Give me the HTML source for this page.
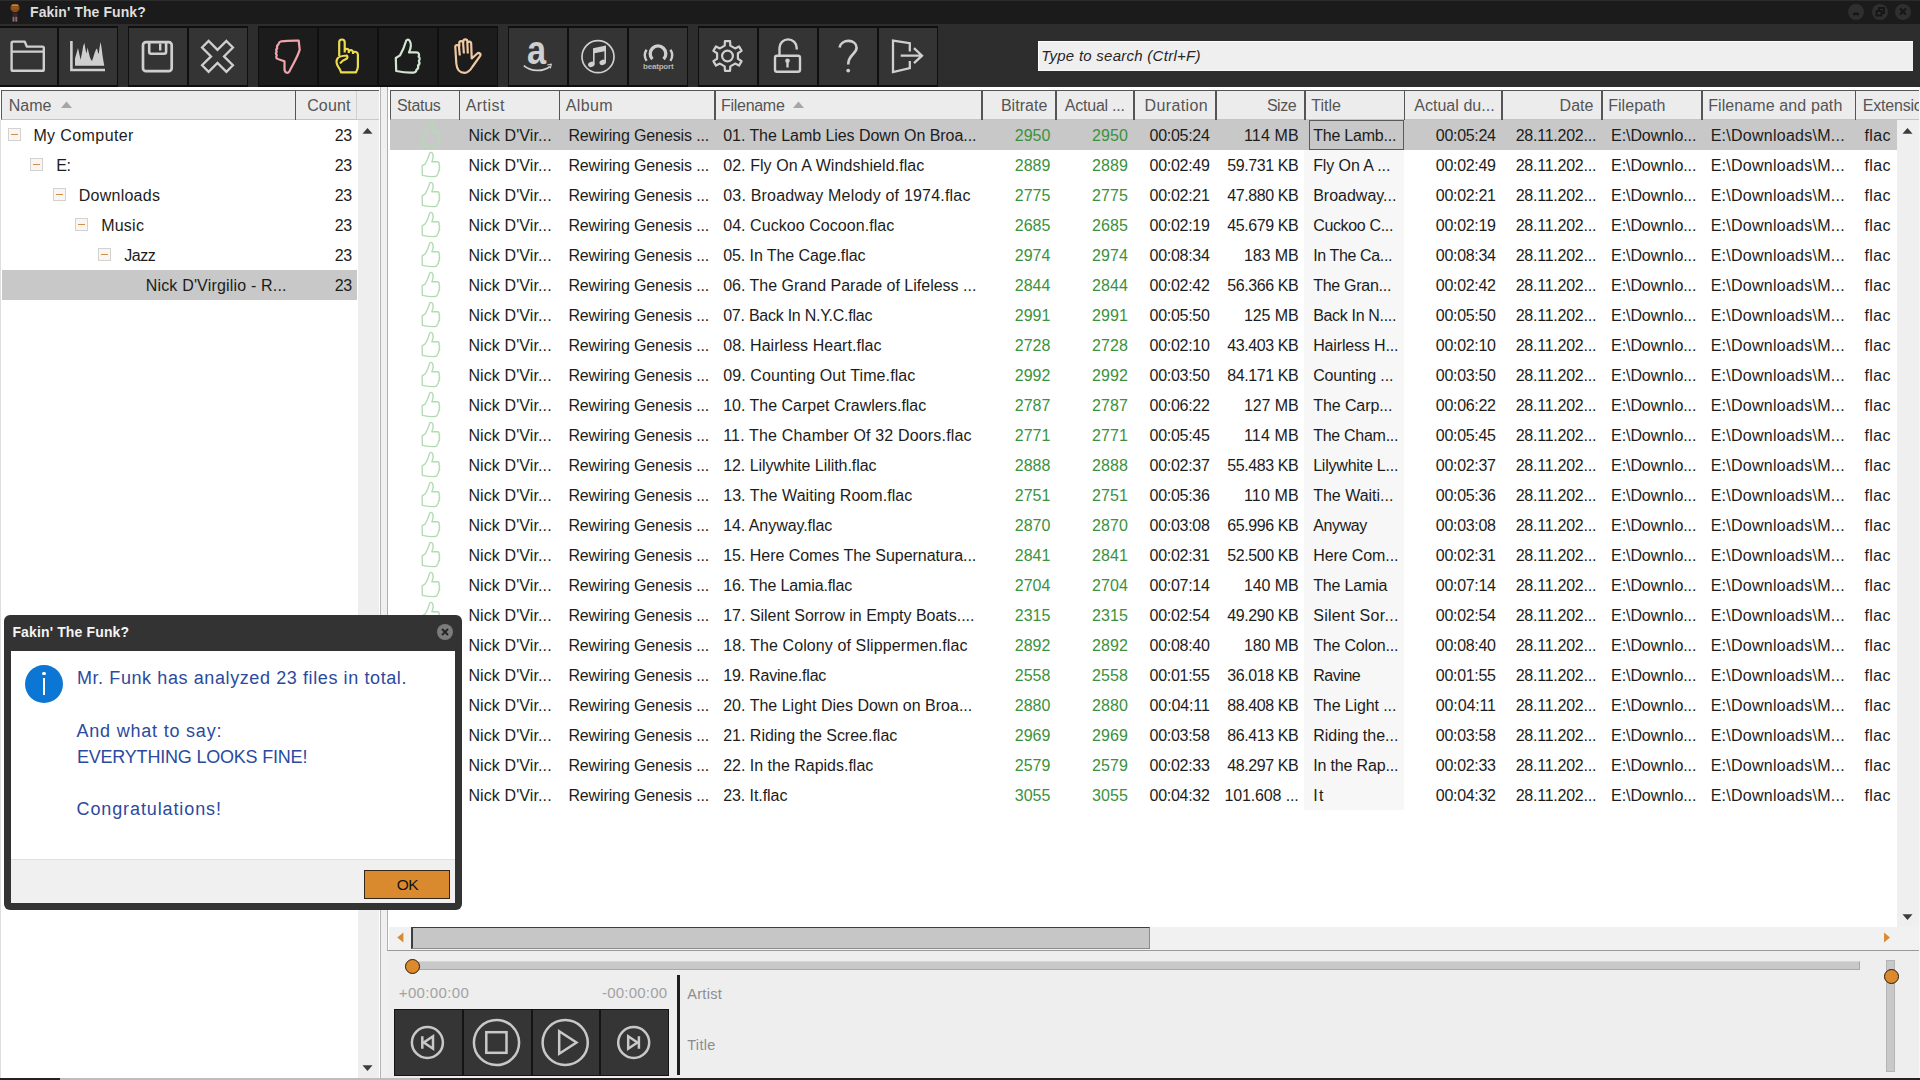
<!DOCTYPE html><html><head><meta charset="utf-8"><title>Fakin' The Funk?</title><style>
*{box-sizing:border-box}
html,body{margin:0;padding:0}
body{width:1920px;height:1080px;position:relative;overflow:hidden;background:#eeeeee;font-family:"Liberation Sans",sans-serif;font-size:16px;color:#1c1c1c}
.a{position:absolute}
.t{position:absolute;white-space:pre;overflow:visible}
.tb{position:absolute;top:26px;width:60px;height:61px;background:#343434;border:1px solid #0f0f0f;border-top-width:2px;border-bottom-width:2px}
.dk{background:#1c1c1c}
.hs{position:absolute;top:90px;width:1.5px;height:30px;background:#555}
.bx{position:absolute;width:13px;height:13px;background:#fbf5f1;border:1px solid #d2d2d2}
.mn{position:absolute;width:7px;height:1px;background:#cf8f4a}
.sel{position:absolute;height:30px;background:#c8c8c8}
</style></head><body>
<div class="a" style="left:0;top:0;width:1920px;height:24px;background:#1b1b1b;border-top:1px solid #2b2b2b"></div>
<svg class="a" style="left:8px;top:2px" width="14" height="22" viewBox="8 2 14 22"><ellipse cx="15" cy="8" rx="4.600" ry="4.100" fill="#8a4e16"/><rect x="11.500" y="4.600" width="7" height="1.300" rx="0.600" fill="#b98a52"/><rect x="12.500" y="7.300" width="5" height="1.200" fill="#a5621f"/><rect x="12.600" y="12.500" width="4.800" height="4.600" fill="#3b2428"/><rect x="12.500" y="16.800" width="2" height="5" rx="0.800" fill="#8c6b6c"/><rect x="15.300" y="16.800" width="2" height="5" rx="0.800" fill="#8c6b6c"/></svg>
<div class="t" style="top:0px;height:24px;line-height:25.0px;font-size:14px;color:#dedede;font-weight:bold;letter-spacing:0.08px;left:30.0px;">Fakin&#x27; The Funk?</div>
<div class="a" style="left:1848px;top:3.500px;width:16px;height:16px;border-radius:8px;background:#2f2f2f"></div>
<div class="a" style="left:1871.5px;top:3.500px;width:16px;height:16px;border-radius:8px;background:#2f2f2f"></div>
<div class="a" style="left:1895px;top:3.500px;width:16px;height:16px;border-radius:8px;background:#2f2f2f"></div>
<svg class="a" style="left:1846px;top:1px" width="70" height="22" viewBox="0 0 70 22" fill="none" stroke="#161616" stroke-width="2"><path d="M7 13h6" stroke-width="2.500"/><rect x="30.500" y="10" width="5" height="4.500"/><path d="M33 9.500v-2.500h5v5h-2"/><path d="M54 7.500l6 6M60 7.500l-6 6" stroke-width="2.200"/></svg>
<div class="a" style="left:0;top:24px;width:1920px;height:63px;background:#2d2d2d"></div>
<div class="tb" style="left:-2px"></div>
<div class="tb" style="left:58px"></div>
<div class="tb" style="left:128px"></div>
<div class="tb" style="left:188px"></div>
<div class="tb dk" style="left:258px"></div>
<div class="tb dk" style="left:318px"></div>
<div class="tb dk" style="left:378px"></div>
<div class="tb dk" style="left:438px"></div>
<div class="tb" style="left:508px"></div>
<div class="tb" style="left:568px"></div>
<div class="tb" style="left:628px"></div>
<div class="tb" style="left:698px"></div>
<div class="tb" style="left:758px"></div>
<div class="tb" style="left:818px"></div>
<div class="tb" style="left:878px"></div>
<svg class="a" style="left:0;top:24px" width="940" height="64" viewBox="0 24 940 64" fill="none" stroke="#cfcfcf" stroke-width="2.400" stroke-linejoin="round" stroke-linecap="butt">
<path d="M11.600 69.400V43a1.400 1.400 0 0 1 1.400-1.400H24.800l2 5H42.400a1.400 1.400 0 0 1 1.400 1.400V69.400a1.400 1.400 0 0 1-1.400 1.400H13a1.400 1.400 0 0 1-1.400-1.400zM11.600 51.600H43.800"/>
<path d="M71.400 41V70h33.600" stroke-width="2.600" stroke-linejoin="miter"/><path d="M75 65.700L75 58.500L76.600 53L78 48L79.300 54L80.600 59.800L82 53L83.200 46L84.400 43L85.600 50L86.600 53.500L87.600 47.500L88.600 52L90 57.500L91.200 60L92 61L93.200 57.500L94.600 53L96 49.500L97 48.500L98 52.500L98.800 54L99.600 47L100.600 42L101.600 48L102.600 56L103.600 62L104.300 65.700z" fill="#cfcfcf" stroke="none"/>
<rect x="143" y="42.100" width="28.700" height="29.100" rx="3" stroke-width="2.700"/><path d="M149.200 42.500V51.700a2 2 0 0 0 2 2H164.100a2 2 0 0 0 2-2V42.500" stroke-width="2.600"/><path d="M160.200 43.500v7" stroke-width="2.400"/>
<path transform="translate(217.500 56.400) rotate(45)" d="M-4.600 -17.200H4.600V-4.600H17.200V4.600H4.600V17.200H-4.600V4.600H-17.200V-4.600H-4.600z" stroke-width="2.300" stroke-linejoin="miter"/>
<path d="M281.300 41.300C287 40.600 293 40.700 298.700 40.700L299.700 49.600C297.800 56.500 293.600 63 290.300 69.600C289.300 72.300 287.800 73.300 286.300 72.600C284.600 71.600 284.400 70 284.500 68.500V61.200C281.500 60 278.500 59.500 276.600 58.400C275.800 57 276.400 56 276.800 55.200C275.600 54 276 52.600 276.700 51.800C275.800 50.400 276.400 49 277.200 48.300C276.600 46.500 277.500 45 278.400 44.300C278.800 42.500 280 41.600 281.300 41.300z" stroke="#f2a3ab" stroke-width="2.200"/>
<path d="M339.200 56V42.200C339.200 38.600 344.700 38.600 344.700 42.200V52.500M344.700 50.200C345.500 48.200 348.600 48.500 348.800 50.600V53M348.800 51.300C349.800 49.400 352.800 49.900 353 52V54M353 52.600C354.600 51 357.800 51.800 357.900 54.500V66.500C357.900 69 357 70.500 356 72.300H341C340.600 70 339.600 68.500 338.300 66.800C336.400 64 336.200 60.500 337.400 58.600C338.600 56.600 341.500 55.800 346.800 55.500C348 57 347.300 58.300 346 59C343.500 60 341.500 61.300 340 63.500" stroke="#ecdc4e" stroke-width="2.200"/>
<path d="M395.800 58L400 55.400C402.500 51 404.500 46.500 405.700 42C406 39.600 408.500 38.800 409.800 41C411.500 44 410.800 48.500 409 52.400H416.500C418.800 52.400 419.800 54.600 418.600 56.400C420 57.800 419.900 60 418.800 61C419.800 62.500 419.400 64.500 418 65.500C418.600 67.300 417.800 69 416.500 69.800C416.400 71.600 415 72.500 413.500 72.600C408 72.900 402 72.200 396.200 71z" stroke="#cfe6d0" stroke-width="2.200"/>
<path d="M456.300 63.500L455.300 47C455.200 44.500 458.600 44.200 459 46.800L459.800 55.500M459.400 46.500L459.200 43.200C459.100 40.500 462.900 40.300 463.100 43L463.900 53.500M463.200 43L463.300 41.500C463.400 38.700 467.300 38.700 467.300 41.500L467.800 53.500M467.400 43.500C467.600 40.800 471.200 41 471.200 43.800L471.700 58.500L477 53.800C479 52 481.500 53.800 480 56.200L472.600 66.500C470.500 70 468.500 72.800 464.500 72.800C460 72.800 456.800 69.500 456.300 63.500" stroke="#efc9a3" stroke-width="2.200"/>
<path d="M523.800 65.600C531 71.800 543 72 550 66.500" stroke-width="1.800"/><path d="M547.300 65l4-0.800-1 4.200" stroke-width="1.200"/>
<circle cx="598" cy="56.700" r="16" stroke-width="1.700"/><g fill="#cfcfcf" stroke="none"><ellipse cx="591.300" cy="64.400" rx="3.300" ry="2.600" transform="rotate(-20 591.300 64.400)"/><ellipse cx="602.700" cy="62.400" rx="3.300" ry="2.600" transform="rotate(-20 602.700 62.400)"/><path d="M593 48.300L606 45.600V62.400H604.400V51.200L594.600 53.200V64.400H593z"/></g>
<path d="M652.400 59.200A7.800 7.800 0 1 1 663.600 59.200" stroke-width="3.300"/><path d="M646.600 49.800C644.400 53 644.400 57.500 646.600 60.800M670.400 49.800C672.600 53 672.600 57.500 670.400 60.800" stroke-width="2.400"/>
<path d="M724.7 45.6 L724.9 41.2 L730.1 41.2 L730.3 45.6 L735.1 48.4 L739.0 46.4 L741.6 50.9 L737.9 53.2 L737.9 58.8 L741.6 61.1 L739.0 65.6 L735.1 63.6 L730.3 66.4 L730.1 70.8 L724.9 70.8 L724.7 66.4 L719.9 63.6 L716.0 65.6 L713.4 61.1 L717.1 58.8 L717.1 53.2 L713.4 50.9 L716.0 46.4 L719.9 48.4z" stroke-width="2.200"/><circle cx="727.5" cy="56.0" r="5.400" stroke-width="2.200"/>
<rect x="775" y="55.800" width="25" height="16" rx="2" stroke-width="2.400"/><path d="M779.500 55.800V48a8.600 8.600 0 0 1 17.200 0V49.600" stroke-width="2.400"/><circle cx="787.500" cy="60.800" r="2.300" fill="#cfcfcf" stroke="none"/><path d="M787.500 61V67.500" stroke-width="2.400"/>
<path d="M839.600 47.500C841 38.500 856.600 38.800 856.600 47.800C856.600 54 848.200 54.500 848.200 64.500" stroke-width="2.600" stroke-linejoin="round"/><circle cx="848.200" cy="70.600" r="1.900" fill="#cfcfcf" stroke="none"/>
<path d="M909.800 51.500V43.200L893 40.600V72L909.800 68.200V61" stroke-width="2.300" stroke-linejoin="miter"/><path d="M900.700 55.700H921.500M914 48.200L922 55.700L914 63.200" stroke-width="2.300" stroke-linejoin="miter"/>
</svg>
<div class="t" style="left:527.300px;top:25px;height:50px;line-height:50px;font-size:40px;font-weight:bold;color:#cfcfcf;transform:scaleX(0.860);transform-origin:0 0">a</div>
<div class="t" style="left:643px;top:61.500px;height:10px;line-height:10px;font-size:8px;font-weight:bold;color:#b4b4b4;letter-spacing:-0.200px">beatport</div>
<div class="a" style="left:1038px;top:40.500px;width:875px;height:30px;background:#efefef;border-top:1px solid #fdfdfd;border-left:1px solid #fdfdfd;border-bottom:1px solid #f8f8f8"></div>
<div class="t" style="top:40px;height:31px;line-height:31px;font-size:15px;color:#262626;font-style:italic;letter-spacing:0.26px;left:1041.2px;">Type to search (Ctrl+F)</div>
<div class="a" style="left:0;top:87px;width:380px;height:991px;background:#fff"></div>
<div class="a" style="left:1px;top:90px;width:378px;height:30px;background:#ececec;border-top:1px solid #5a5a5a;border-bottom:1px solid #c4c4c4;border-left:1px solid #5a5a5a"></div>
<div class="hs" style="left:294.800px"></div>
<div class="a" style="left:356px;top:91px;width:1px;height:28px;background:#d0d0d0"></div>
<div class="a" style="left:357px;top:119px;width:22px;height:1px;background:#c8c8c8"></div>
<div class="a" style="left:358px;top:120px;width:21px;height:958px;background:#eeeeee"></div>
<div class="t" style="top:91px;height:28px;line-height:30px;color:#555;left:8.7px;">Name</div>
<div class="t" style="top:91px;height:28px;line-height:30px;color:#555;letter-spacing:0.12px;left:307.2px;">Count</div>
<svg class="a" style="left:60px;top:100px" width="14" height="9"><path d="M1 8L6.500 1.500L12 8z" fill="#a6a6a6"/></svg>
<svg class="a" style="left:361px;top:126px" width="13" height="9"><path d="M1.500 7.800L6.500 2L11.500 7.800z" fill="#3c3c3c"/></svg>
<svg class="a" style="left:361px;top:1064px" width="13" height="9"><path d="M1.500 1.200L6.500 7L11.500 1.200z" fill="#3c3c3c"/></svg>
<div class="bx" style="left:8px;top:128px"></div><div class="mn" style="left:11px;top:134px"></div>
<div class="t" style="top:120px;height:30px;line-height:32.0px;letter-spacing:0.4px;left:33.4px;">My Computer</div>
<div class="t" style="top:120px;height:30px;line-height:32.0px;letter-spacing:-0.45px;left:334.7px;">23</div>
<div class="bx" style="left:30px;top:158px"></div><div class="mn" style="left:33px;top:164px"></div>
<div class="t" style="top:150px;height:30px;line-height:32.0px;letter-spacing:-0.45px;left:56.2px;">E:</div>
<div class="t" style="top:150px;height:30px;line-height:32.0px;letter-spacing:-0.45px;left:334.7px;">23</div>
<div class="bx" style="left:53px;top:188px"></div><div class="mn" style="left:56px;top:194px"></div>
<div class="t" style="top:180px;height:30px;line-height:32.0px;letter-spacing:0.26px;left:78.7px;">Downloads</div>
<div class="t" style="top:180px;height:30px;line-height:32.0px;letter-spacing:-0.45px;left:334.7px;">23</div>
<div class="bx" style="left:75px;top:218px"></div><div class="mn" style="left:78px;top:224px"></div>
<div class="t" style="top:210px;height:30px;line-height:32.0px;letter-spacing:0.23px;left:101.2px;">Music</div>
<div class="t" style="top:210px;height:30px;line-height:32.0px;letter-spacing:-0.45px;left:334.7px;">23</div>
<div class="bx" style="left:98px;top:248px"></div><div class="mn" style="left:101px;top:254px"></div>
<div class="t" style="top:240px;height:30px;line-height:32.0px;letter-spacing:-0.45px;left:124.2px;">Jazz</div>
<div class="t" style="top:240px;height:30px;line-height:32.0px;letter-spacing:-0.45px;left:334.7px;">23</div>
<div class="sel" style="left:2px;top:270px;width:355px"></div>
<div class="t" style="top:270px;height:30px;line-height:32.0px;letter-spacing:0.18px;left:145.7px;">Nick D&#x27;Virgilio - R...</div>
<div class="t" style="top:270px;height:30px;line-height:32.0px;letter-spacing:-0.45px;left:334.7px;">23</div>
<div class="a" style="left:380px;top:87px;width:8px;height:991px;background:#f0f0f0;border-left:1px solid #b4b4b4"></div>
<div class="a" style="left:387px;top:87px;width:1533px;height:864px;background:#fff;border-left:1px solid #b0b0b0;border-bottom:1px solid #9a9a9a"></div>
<div class="a" style="left:390px;top:90px;width:1530px;height:30px;background:#ececec;border-top:1px solid #555;border-bottom:1px solid #c4c4c4;border-left:1px solid #555"></div>
<div class="hs" style="left:458.7px"></div>
<div class="hs" style="left:558.7px"></div>
<div class="hs" style="left:714.2px"></div>
<div class="hs" style="left:981.2px"></div>
<div class="hs" style="left:1055.2px"></div>
<div class="hs" style="left:1133.2px"></div>
<div class="hs" style="left:1215.2px"></div>
<div class="hs" style="left:1304.2px"></div>
<div class="hs" style="left:1403.7px"></div>
<div class="hs" style="left:1501.2px"></div>
<div class="hs" style="left:1601.2px"></div>
<div class="hs" style="left:1701.2px"></div>
<div class="hs" style="left:1854.7px"></div>
<div class="t" style="top:91px;height:28px;line-height:30px;color:#555;letter-spacing:-0.29px;left:396.9px;">Status</div>
<div class="t" style="top:91px;height:28px;line-height:30px;color:#555;letter-spacing:0.45px;left:465.7px;">Artist</div>
<div class="t" style="top:91px;height:28px;line-height:30px;color:#555;letter-spacing:0.41px;left:565.7px;">Album</div>
<div class="t" style="top:91px;height:28px;line-height:30px;color:#555;letter-spacing:-0.3px;left:721.1px;">Filename</div>
<div class="t" style="top:91px;height:28px;line-height:30px;color:#555;letter-spacing:0.03px;left:1000.9px;">Bitrate</div>
<div class="t" style="top:91px;height:28px;line-height:30px;color:#555;letter-spacing:-0.23px;left:1064.8px;">Actual ...</div>
<div class="t" style="top:91px;height:28px;line-height:30px;color:#555;letter-spacing:0.37px;left:1144.6px;">Duration</div>
<div class="t" style="top:91px;height:28px;line-height:30px;color:#555;letter-spacing:-0.45px;left:1266.9px;">Size</div>
<div class="t" style="top:91px;height:28px;line-height:30px;color:#555;letter-spacing:0.04px;left:1311.2px;">Title</div>
<div class="t" style="top:91px;height:28px;line-height:30px;color:#555;letter-spacing:0.04px;left:1414.2px;">Actual du...</div>
<div class="t" style="top:91px;height:28px;line-height:30px;color:#555;left:1559.6px;">Date</div>
<div class="t" style="top:91px;height:28px;line-height:30px;color:#555;letter-spacing:0.04px;left:1608.2px;">Filepath</div>
<div class="t" style="top:91px;height:28px;line-height:30px;color:#555;letter-spacing:0.1px;left:1708.2px;">Filename and path</div>
<div class="t" style="top:91px;height:28px;line-height:30px;color:#555;letter-spacing:-0.2px;left:1862.8px;">Extensic</div>
<svg class="a" style="left:792px;top:100px" width="14" height="9"><path d="M1 8L6.500 1.500L12 8z" fill="#a6a6a6"/></svg>
<div class="a" style="left:1304px;top:150px;width:100px;height:660px;background:#f7f7f7"></div>
<div class="sel" style="left:390px;top:120px;width:1507px"></div>
<div class="a" style="left:1309px;top:120px;width:95px;height:30px;border:1px solid #5a5a5a"></div>
<svg class="a" style="left:390px;top:120px" width="70" height="690" viewBox="0 0 70 690" fill="none" stroke="#b2dbb2" stroke-width="1.900" stroke-linejoin="round">
<path transform="translate(-258.800 -26.8) scale(0.735)" d="M395.800 58L400 55.400C402.500 51 404.500 46.500 405.700 42C406 39.600 408.500 38.800 409.800 41C411.500 44 410.800 48.500 409 52.400H416.500C418.800 52.400 419.800 54.600 418.600 56.400C420 57.800 419.900 60 418.800 61C419.800 62.500 419.400 64.500 418 65.500C418.600 67.300 417.800 69 416.500 69.800C416.400 71.600 415 72.500 413.500 72.600C408 72.900 402 72.200 396.200 71z"/>
<path transform="translate(-258.800 3.2) scale(0.735)" d="M395.800 58L400 55.400C402.500 51 404.500 46.500 405.700 42C406 39.600 408.500 38.800 409.800 41C411.500 44 410.800 48.500 409 52.400H416.500C418.800 52.400 419.800 54.600 418.600 56.400C420 57.800 419.900 60 418.800 61C419.800 62.500 419.400 64.500 418 65.500C418.600 67.300 417.800 69 416.500 69.800C416.400 71.600 415 72.500 413.500 72.600C408 72.900 402 72.200 396.200 71z"/>
<path transform="translate(-258.800 33.2) scale(0.735)" d="M395.800 58L400 55.400C402.500 51 404.500 46.500 405.700 42C406 39.600 408.500 38.800 409.800 41C411.500 44 410.800 48.500 409 52.400H416.500C418.800 52.400 419.800 54.600 418.600 56.400C420 57.800 419.900 60 418.800 61C419.800 62.500 419.400 64.500 418 65.500C418.600 67.300 417.800 69 416.500 69.800C416.400 71.600 415 72.500 413.500 72.600C408 72.900 402 72.200 396.200 71z"/>
<path transform="translate(-258.800 63.2) scale(0.735)" d="M395.800 58L400 55.400C402.500 51 404.500 46.500 405.700 42C406 39.600 408.500 38.800 409.800 41C411.500 44 410.800 48.500 409 52.400H416.500C418.800 52.400 419.800 54.600 418.600 56.400C420 57.800 419.900 60 418.800 61C419.800 62.500 419.400 64.500 418 65.500C418.600 67.300 417.800 69 416.500 69.800C416.400 71.600 415 72.500 413.500 72.600C408 72.900 402 72.200 396.200 71z"/>
<path transform="translate(-258.800 93.2) scale(0.735)" d="M395.800 58L400 55.400C402.500 51 404.500 46.500 405.700 42C406 39.600 408.500 38.800 409.800 41C411.500 44 410.800 48.500 409 52.400H416.500C418.800 52.400 419.800 54.600 418.600 56.400C420 57.800 419.900 60 418.800 61C419.800 62.500 419.400 64.500 418 65.500C418.600 67.300 417.800 69 416.500 69.800C416.400 71.600 415 72.500 413.500 72.600C408 72.900 402 72.200 396.200 71z"/>
<path transform="translate(-258.800 123.2) scale(0.735)" d="M395.800 58L400 55.400C402.500 51 404.500 46.500 405.700 42C406 39.600 408.500 38.800 409.800 41C411.500 44 410.800 48.500 409 52.400H416.500C418.800 52.400 419.800 54.600 418.600 56.400C420 57.800 419.900 60 418.800 61C419.800 62.500 419.400 64.500 418 65.500C418.600 67.300 417.800 69 416.500 69.800C416.400 71.600 415 72.500 413.500 72.600C408 72.900 402 72.200 396.200 71z"/>
<path transform="translate(-258.800 153.2) scale(0.735)" d="M395.800 58L400 55.400C402.500 51 404.500 46.500 405.700 42C406 39.600 408.500 38.800 409.800 41C411.500 44 410.800 48.500 409 52.400H416.500C418.800 52.400 419.800 54.600 418.600 56.400C420 57.800 419.900 60 418.800 61C419.800 62.500 419.400 64.500 418 65.500C418.600 67.300 417.800 69 416.500 69.800C416.400 71.600 415 72.500 413.500 72.600C408 72.900 402 72.200 396.200 71z"/>
<path transform="translate(-258.800 183.2) scale(0.735)" d="M395.800 58L400 55.400C402.500 51 404.500 46.500 405.700 42C406 39.600 408.500 38.800 409.800 41C411.500 44 410.800 48.500 409 52.400H416.500C418.800 52.400 419.800 54.600 418.600 56.400C420 57.800 419.900 60 418.800 61C419.800 62.500 419.400 64.500 418 65.500C418.600 67.300 417.800 69 416.500 69.800C416.400 71.600 415 72.500 413.500 72.600C408 72.900 402 72.200 396.200 71z"/>
<path transform="translate(-258.800 213.2) scale(0.735)" d="M395.800 58L400 55.400C402.500 51 404.500 46.500 405.700 42C406 39.600 408.500 38.800 409.800 41C411.500 44 410.800 48.500 409 52.400H416.500C418.800 52.400 419.800 54.600 418.600 56.400C420 57.800 419.900 60 418.800 61C419.800 62.500 419.400 64.500 418 65.500C418.600 67.300 417.800 69 416.500 69.800C416.400 71.600 415 72.500 413.500 72.600C408 72.900 402 72.200 396.200 71z"/>
<path transform="translate(-258.800 243.2) scale(0.735)" d="M395.800 58L400 55.400C402.500 51 404.500 46.500 405.700 42C406 39.600 408.500 38.800 409.800 41C411.500 44 410.800 48.500 409 52.400H416.500C418.800 52.400 419.800 54.600 418.600 56.400C420 57.800 419.900 60 418.800 61C419.800 62.500 419.400 64.500 418 65.500C418.600 67.300 417.800 69 416.500 69.800C416.400 71.600 415 72.500 413.500 72.600C408 72.900 402 72.200 396.200 71z"/>
<path transform="translate(-258.800 273.2) scale(0.735)" d="M395.800 58L400 55.400C402.500 51 404.500 46.500 405.700 42C406 39.600 408.500 38.800 409.800 41C411.500 44 410.800 48.500 409 52.400H416.500C418.800 52.400 419.800 54.600 418.600 56.400C420 57.800 419.900 60 418.800 61C419.800 62.500 419.400 64.500 418 65.500C418.600 67.300 417.800 69 416.500 69.800C416.400 71.600 415 72.500 413.500 72.600C408 72.900 402 72.200 396.200 71z"/>
<path transform="translate(-258.800 303.2) scale(0.735)" d="M395.800 58L400 55.400C402.500 51 404.500 46.500 405.700 42C406 39.600 408.500 38.800 409.800 41C411.500 44 410.800 48.500 409 52.400H416.500C418.800 52.400 419.800 54.600 418.600 56.400C420 57.800 419.900 60 418.800 61C419.800 62.500 419.400 64.500 418 65.500C418.600 67.300 417.800 69 416.500 69.800C416.400 71.600 415 72.500 413.500 72.600C408 72.900 402 72.200 396.200 71z"/>
<path transform="translate(-258.800 333.2) scale(0.735)" d="M395.800 58L400 55.400C402.500 51 404.500 46.500 405.700 42C406 39.600 408.500 38.800 409.800 41C411.500 44 410.800 48.500 409 52.400H416.500C418.800 52.400 419.800 54.600 418.600 56.400C420 57.800 419.900 60 418.800 61C419.800 62.500 419.400 64.500 418 65.500C418.600 67.300 417.800 69 416.500 69.800C416.400 71.600 415 72.500 413.500 72.600C408 72.900 402 72.200 396.200 71z"/>
<path transform="translate(-258.800 363.2) scale(0.735)" d="M395.800 58L400 55.400C402.500 51 404.500 46.500 405.700 42C406 39.600 408.500 38.800 409.800 41C411.500 44 410.800 48.500 409 52.400H416.500C418.800 52.400 419.800 54.600 418.600 56.400C420 57.800 419.900 60 418.800 61C419.800 62.500 419.400 64.500 418 65.500C418.600 67.300 417.800 69 416.500 69.800C416.400 71.600 415 72.500 413.500 72.600C408 72.900 402 72.200 396.200 71z"/>
<path transform="translate(-258.800 393.2) scale(0.735)" d="M395.800 58L400 55.400C402.500 51 404.500 46.500 405.700 42C406 39.600 408.500 38.800 409.800 41C411.500 44 410.800 48.500 409 52.400H416.500C418.800 52.400 419.800 54.600 418.600 56.400C420 57.800 419.900 60 418.800 61C419.800 62.500 419.400 64.500 418 65.500C418.600 67.300 417.800 69 416.500 69.800C416.400 71.600 415 72.500 413.500 72.600C408 72.900 402 72.200 396.200 71z"/>
<path transform="translate(-258.800 423.2) scale(0.735)" d="M395.800 58L400 55.400C402.500 51 404.500 46.500 405.700 42C406 39.600 408.500 38.800 409.800 41C411.500 44 410.800 48.500 409 52.400H416.500C418.800 52.400 419.800 54.600 418.600 56.400C420 57.800 419.900 60 418.800 61C419.800 62.500 419.400 64.500 418 65.500C418.600 67.300 417.800 69 416.500 69.800C416.400 71.600 415 72.500 413.500 72.600C408 72.900 402 72.200 396.200 71z"/>
<path transform="translate(-258.800 453.2) scale(0.735)" d="M395.800 58L400 55.400C402.500 51 404.500 46.500 405.700 42C406 39.600 408.500 38.800 409.800 41C411.500 44 410.800 48.500 409 52.400H416.500C418.800 52.400 419.800 54.600 418.600 56.400C420 57.800 419.900 60 418.800 61C419.800 62.500 419.400 64.500 418 65.500C418.600 67.300 417.800 69 416.500 69.800C416.400 71.600 415 72.500 413.500 72.600C408 72.900 402 72.200 396.200 71z"/>
<path transform="translate(-258.800 483.2) scale(0.735)" d="M395.800 58L400 55.400C402.500 51 404.500 46.500 405.700 42C406 39.600 408.500 38.800 409.800 41C411.500 44 410.800 48.500 409 52.400H416.500C418.800 52.400 419.800 54.600 418.600 56.400C420 57.800 419.900 60 418.800 61C419.800 62.500 419.400 64.500 418 65.500C418.600 67.300 417.800 69 416.500 69.800C416.400 71.600 415 72.500 413.500 72.600C408 72.900 402 72.200 396.200 71z"/>
<path transform="translate(-258.800 513.2) scale(0.735)" d="M395.800 58L400 55.400C402.500 51 404.500 46.500 405.700 42C406 39.600 408.500 38.800 409.800 41C411.500 44 410.800 48.500 409 52.400H416.500C418.800 52.400 419.800 54.600 418.600 56.400C420 57.800 419.900 60 418.800 61C419.800 62.500 419.400 64.500 418 65.500C418.600 67.300 417.800 69 416.500 69.800C416.400 71.600 415 72.500 413.500 72.600C408 72.900 402 72.200 396.200 71z"/>
<path transform="translate(-258.800 543.2) scale(0.735)" d="M395.800 58L400 55.400C402.500 51 404.500 46.500 405.700 42C406 39.600 408.500 38.800 409.800 41C411.500 44 410.800 48.500 409 52.400H416.500C418.800 52.400 419.800 54.600 418.600 56.400C420 57.800 419.900 60 418.800 61C419.800 62.500 419.400 64.500 418 65.500C418.600 67.300 417.800 69 416.500 69.800C416.400 71.600 415 72.500 413.500 72.600C408 72.900 402 72.200 396.200 71z"/>
<path transform="translate(-258.800 573.2) scale(0.735)" d="M395.800 58L400 55.400C402.500 51 404.500 46.500 405.700 42C406 39.600 408.500 38.800 409.800 41C411.500 44 410.800 48.500 409 52.400H416.500C418.800 52.400 419.800 54.600 418.600 56.400C420 57.800 419.900 60 418.800 61C419.800 62.500 419.400 64.500 418 65.500C418.600 67.300 417.800 69 416.500 69.800C416.400 71.600 415 72.500 413.500 72.600C408 72.900 402 72.200 396.200 71z"/>
<path transform="translate(-258.800 603.2) scale(0.735)" d="M395.800 58L400 55.400C402.500 51 404.500 46.500 405.700 42C406 39.600 408.500 38.800 409.800 41C411.500 44 410.800 48.500 409 52.400H416.500C418.800 52.400 419.800 54.600 418.600 56.400C420 57.800 419.900 60 418.800 61C419.800 62.500 419.400 64.500 418 65.500C418.600 67.300 417.800 69 416.500 69.800C416.400 71.600 415 72.500 413.500 72.600C408 72.900 402 72.200 396.200 71z"/>
<path transform="translate(-258.800 633.2) scale(0.735)" d="M395.800 58L400 55.400C402.500 51 404.500 46.500 405.700 42C406 39.600 408.500 38.800 409.800 41C411.500 44 410.800 48.500 409 52.400H416.500C418.800 52.400 419.800 54.600 418.600 56.400C420 57.800 419.900 60 418.800 61C419.800 62.500 419.400 64.500 418 65.500C418.600 67.300 417.800 69 416.500 69.800C416.400 71.600 415 72.500 413.500 72.600C408 72.900 402 72.200 396.200 71z"/>
</svg>
<div class="t" style="top:120px;height:30px;line-height:32.0px;letter-spacing:0.11px;left:468.4px;">Nick D&#x27;Vir...</div>
<div class="t" style="top:120px;height:30px;line-height:32.0px;letter-spacing:-0.12px;left:568.4px;">Rewiring Genesis ...</div>
<div class="t" style="top:120px;height:30px;line-height:32.0px;letter-spacing:-0.05px;left:723.2px;">01. The Lamb Lies Down On Broa...</div>
<div class="t" style="top:120px;height:30px;line-height:32.0px;color:#3a923c;left:1014.8px;">2950</div>
<div class="t" style="top:120px;height:30px;line-height:32.0px;color:#3a923c;letter-spacing:0.14px;left:1091.9px;">2950</div>
<div class="t" style="top:120px;height:30px;line-height:32.0px;letter-spacing:-0.3px;left:1149.6px;">00:05:24</div>
<div class="t" style="top:120px;height:30px;line-height:32.0px;letter-spacing:0.15px;left:1244.0px;">114 MB</div>
<div class="t" style="top:120px;height:30px;line-height:32.0px;letter-spacing:-0.22px;left:1313.2px;">The Lamb...</div>
<div class="t" style="top:120px;height:30px;line-height:32.0px;letter-spacing:-0.3px;left:1435.8px;">00:05:24</div>
<div class="t" style="top:120px;height:30px;line-height:32.0px;letter-spacing:-0.24px;left:1515.7px;">28.11.202...</div>
<div class="t" style="top:120px;height:30px;line-height:32.0px;letter-spacing:-0.09px;left:1611.1px;">E:\Downlo...</div>
<div class="t" style="top:120px;height:30px;line-height:32.0px;letter-spacing:0.26px;left:1710.7px;">E:\Downloads\M...</div>
<div class="t" style="top:120px;height:30px;line-height:32.0px;letter-spacing:0.3px;left:1864.6px;">flac</div>
<div class="t" style="top:150px;height:30px;line-height:32.0px;letter-spacing:0.11px;left:468.4px;">Nick D&#x27;Vir...</div>
<div class="t" style="top:150px;height:30px;line-height:32.0px;letter-spacing:-0.12px;left:568.4px;">Rewiring Genesis ...</div>
<div class="t" style="top:150px;height:30px;line-height:32.0px;letter-spacing:0.07px;left:723.2px;">02. Fly On A Windshield.flac</div>
<div class="t" style="top:150px;height:30px;line-height:32.0px;color:#3a923c;left:1014.8px;">2889</div>
<div class="t" style="top:150px;height:30px;line-height:32.0px;color:#3a923c;letter-spacing:0.14px;left:1091.9px;">2889</div>
<div class="t" style="top:150px;height:30px;line-height:32.0px;letter-spacing:-0.3px;left:1149.6px;">00:02:49</div>
<div class="t" style="top:150px;height:30px;line-height:32.0px;letter-spacing:-0.4px;left:1227.2px;">59.731 KB</div>
<div class="t" style="top:150px;height:30px;line-height:32.0px;letter-spacing:-0.1px;left:1313.2px;">Fly On A ...</div>
<div class="t" style="top:150px;height:30px;line-height:32.0px;letter-spacing:-0.3px;left:1435.8px;">00:02:49</div>
<div class="t" style="top:150px;height:30px;line-height:32.0px;letter-spacing:-0.24px;left:1515.7px;">28.11.202...</div>
<div class="t" style="top:150px;height:30px;line-height:32.0px;letter-spacing:-0.09px;left:1611.1px;">E:\Downlo...</div>
<div class="t" style="top:150px;height:30px;line-height:32.0px;letter-spacing:0.26px;left:1710.7px;">E:\Downloads\M...</div>
<div class="t" style="top:150px;height:30px;line-height:32.0px;letter-spacing:0.3px;left:1864.6px;">flac</div>
<div class="t" style="top:180px;height:30px;line-height:32.0px;letter-spacing:0.11px;left:468.4px;">Nick D&#x27;Vir...</div>
<div class="t" style="top:180px;height:30px;line-height:32.0px;letter-spacing:-0.12px;left:568.4px;">Rewiring Genesis ...</div>
<div class="t" style="top:180px;height:30px;line-height:32.0px;letter-spacing:0.2px;left:723.2px;">03. Broadway Melody of 1974.flac</div>
<div class="t" style="top:180px;height:30px;line-height:32.0px;color:#3a923c;left:1014.8px;">2775</div>
<div class="t" style="top:180px;height:30px;line-height:32.0px;color:#3a923c;letter-spacing:0.14px;left:1091.9px;">2775</div>
<div class="t" style="top:180px;height:30px;line-height:32.0px;letter-spacing:-0.3px;left:1149.6px;">00:02:21</div>
<div class="t" style="top:180px;height:30px;line-height:32.0px;letter-spacing:-0.4px;left:1227.2px;">47.880 KB</div>
<div class="t" style="top:180px;height:30px;line-height:32.0px;letter-spacing:-0.01px;left:1313.2px;">Broadway...</div>
<div class="t" style="top:180px;height:30px;line-height:32.0px;letter-spacing:-0.3px;left:1435.8px;">00:02:21</div>
<div class="t" style="top:180px;height:30px;line-height:32.0px;letter-spacing:-0.24px;left:1515.7px;">28.11.202...</div>
<div class="t" style="top:180px;height:30px;line-height:32.0px;letter-spacing:-0.09px;left:1611.1px;">E:\Downlo...</div>
<div class="t" style="top:180px;height:30px;line-height:32.0px;letter-spacing:0.26px;left:1710.7px;">E:\Downloads\M...</div>
<div class="t" style="top:180px;height:30px;line-height:32.0px;letter-spacing:0.3px;left:1864.6px;">flac</div>
<div class="t" style="top:210px;height:30px;line-height:32.0px;letter-spacing:0.11px;left:468.4px;">Nick D&#x27;Vir...</div>
<div class="t" style="top:210px;height:30px;line-height:32.0px;letter-spacing:-0.12px;left:568.4px;">Rewiring Genesis ...</div>
<div class="t" style="top:210px;height:30px;line-height:32.0px;letter-spacing:0.06px;left:723.2px;">04. Cuckoo Cocoon.flac</div>
<div class="t" style="top:210px;height:30px;line-height:32.0px;color:#3a923c;left:1014.8px;">2685</div>
<div class="t" style="top:210px;height:30px;line-height:32.0px;color:#3a923c;letter-spacing:0.14px;left:1091.9px;">2685</div>
<div class="t" style="top:210px;height:30px;line-height:32.0px;letter-spacing:-0.3px;left:1149.6px;">00:02:19</div>
<div class="t" style="top:210px;height:30px;line-height:32.0px;letter-spacing:-0.4px;left:1227.2px;">45.679 KB</div>
<div class="t" style="top:210px;height:30px;line-height:32.0px;letter-spacing:-0.34px;left:1313.2px;">Cuckoo C...</div>
<div class="t" style="top:210px;height:30px;line-height:32.0px;letter-spacing:-0.3px;left:1435.8px;">00:02:19</div>
<div class="t" style="top:210px;height:30px;line-height:32.0px;letter-spacing:-0.24px;left:1515.7px;">28.11.202...</div>
<div class="t" style="top:210px;height:30px;line-height:32.0px;letter-spacing:-0.09px;left:1611.1px;">E:\Downlo...</div>
<div class="t" style="top:210px;height:30px;line-height:32.0px;letter-spacing:0.26px;left:1710.7px;">E:\Downloads\M...</div>
<div class="t" style="top:210px;height:30px;line-height:32.0px;letter-spacing:0.3px;left:1864.6px;">flac</div>
<div class="t" style="top:240px;height:30px;line-height:32.0px;letter-spacing:0.11px;left:468.4px;">Nick D&#x27;Vir...</div>
<div class="t" style="top:240px;height:30px;line-height:32.0px;letter-spacing:-0.12px;left:568.4px;">Rewiring Genesis ...</div>
<div class="t" style="top:240px;height:30px;line-height:32.0px;letter-spacing:-0.08px;left:723.2px;">05. In The Cage.flac</div>
<div class="t" style="top:240px;height:30px;line-height:32.0px;color:#3a923c;left:1014.8px;">2974</div>
<div class="t" style="top:240px;height:30px;line-height:32.0px;color:#3a923c;letter-spacing:0.14px;left:1091.9px;">2974</div>
<div class="t" style="top:240px;height:30px;line-height:32.0px;letter-spacing:-0.3px;left:1149.6px;">00:08:34</div>
<div class="t" style="top:240px;height:30px;line-height:32.0px;letter-spacing:-0.09px;left:1244.0px;">183 MB</div>
<div class="t" style="top:240px;height:30px;line-height:32.0px;letter-spacing:-0.37px;left:1313.2px;">In The Ca...</div>
<div class="t" style="top:240px;height:30px;line-height:32.0px;letter-spacing:-0.3px;left:1435.8px;">00:08:34</div>
<div class="t" style="top:240px;height:30px;line-height:32.0px;letter-spacing:-0.24px;left:1515.7px;">28.11.202...</div>
<div class="t" style="top:240px;height:30px;line-height:32.0px;letter-spacing:-0.09px;left:1611.1px;">E:\Downlo...</div>
<div class="t" style="top:240px;height:30px;line-height:32.0px;letter-spacing:0.26px;left:1710.7px;">E:\Downloads\M...</div>
<div class="t" style="top:240px;height:30px;line-height:32.0px;letter-spacing:0.3px;left:1864.6px;">flac</div>
<div class="t" style="top:270px;height:30px;line-height:32.0px;letter-spacing:0.11px;left:468.4px;">Nick D&#x27;Vir...</div>
<div class="t" style="top:270px;height:30px;line-height:32.0px;letter-spacing:-0.12px;left:568.4px;">Rewiring Genesis ...</div>
<div class="t" style="top:270px;height:30px;line-height:32.0px;left:723.2px;">06. The Grand Parade of Lifeless ...</div>
<div class="t" style="top:270px;height:30px;line-height:32.0px;color:#3a923c;left:1014.8px;">2844</div>
<div class="t" style="top:270px;height:30px;line-height:32.0px;color:#3a923c;letter-spacing:0.14px;left:1091.9px;">2844</div>
<div class="t" style="top:270px;height:30px;line-height:32.0px;letter-spacing:-0.3px;left:1149.6px;">00:02:42</div>
<div class="t" style="top:270px;height:30px;line-height:32.0px;letter-spacing:-0.4px;left:1227.2px;">56.366 KB</div>
<div class="t" style="top:270px;height:30px;line-height:32.0px;letter-spacing:-0.27px;left:1313.2px;">The Gran...</div>
<div class="t" style="top:270px;height:30px;line-height:32.0px;letter-spacing:-0.3px;left:1435.8px;">00:02:42</div>
<div class="t" style="top:270px;height:30px;line-height:32.0px;letter-spacing:-0.24px;left:1515.7px;">28.11.202...</div>
<div class="t" style="top:270px;height:30px;line-height:32.0px;letter-spacing:-0.09px;left:1611.1px;">E:\Downlo...</div>
<div class="t" style="top:270px;height:30px;line-height:32.0px;letter-spacing:0.26px;left:1710.7px;">E:\Downloads\M...</div>
<div class="t" style="top:270px;height:30px;line-height:32.0px;letter-spacing:0.3px;left:1864.6px;">flac</div>
<div class="t" style="top:300px;height:30px;line-height:32.0px;letter-spacing:0.11px;left:468.4px;">Nick D&#x27;Vir...</div>
<div class="t" style="top:300px;height:30px;line-height:32.0px;letter-spacing:-0.12px;left:568.4px;">Rewiring Genesis ...</div>
<div class="t" style="top:300px;height:30px;line-height:32.0px;letter-spacing:-0.25px;left:723.2px;">07. Back In N.Y.C.flac</div>
<div class="t" style="top:300px;height:30px;line-height:32.0px;color:#3a923c;left:1014.8px;">2991</div>
<div class="t" style="top:300px;height:30px;line-height:32.0px;color:#3a923c;letter-spacing:0.14px;left:1091.9px;">2991</div>
<div class="t" style="top:300px;height:30px;line-height:32.0px;letter-spacing:-0.3px;left:1149.6px;">00:05:50</div>
<div class="t" style="top:300px;height:30px;line-height:32.0px;letter-spacing:-0.09px;left:1244.0px;">125 MB</div>
<div class="t" style="top:300px;height:30px;line-height:32.0px;letter-spacing:-0.33px;left:1313.2px;">Back In N....</div>
<div class="t" style="top:300px;height:30px;line-height:32.0px;letter-spacing:-0.3px;left:1435.8px;">00:05:50</div>
<div class="t" style="top:300px;height:30px;line-height:32.0px;letter-spacing:-0.24px;left:1515.7px;">28.11.202...</div>
<div class="t" style="top:300px;height:30px;line-height:32.0px;letter-spacing:-0.09px;left:1611.1px;">E:\Downlo...</div>
<div class="t" style="top:300px;height:30px;line-height:32.0px;letter-spacing:0.26px;left:1710.7px;">E:\Downloads\M...</div>
<div class="t" style="top:300px;height:30px;line-height:32.0px;letter-spacing:0.3px;left:1864.6px;">flac</div>
<div class="t" style="top:330px;height:30px;line-height:32.0px;letter-spacing:0.11px;left:468.4px;">Nick D&#x27;Vir...</div>
<div class="t" style="top:330px;height:30px;line-height:32.0px;letter-spacing:-0.12px;left:568.4px;">Rewiring Genesis ...</div>
<div class="t" style="top:330px;height:30px;line-height:32.0px;letter-spacing:0.04px;left:723.2px;">08. Hairless Heart.flac</div>
<div class="t" style="top:330px;height:30px;line-height:32.0px;color:#3a923c;left:1014.8px;">2728</div>
<div class="t" style="top:330px;height:30px;line-height:32.0px;color:#3a923c;letter-spacing:0.14px;left:1091.9px;">2728</div>
<div class="t" style="top:330px;height:30px;line-height:32.0px;letter-spacing:-0.3px;left:1149.6px;">00:02:10</div>
<div class="t" style="top:330px;height:30px;line-height:32.0px;letter-spacing:-0.4px;left:1227.2px;">43.403 KB</div>
<div class="t" style="top:330px;height:30px;line-height:32.0px;letter-spacing:-0.16px;left:1313.2px;">Hairless H...</div>
<div class="t" style="top:330px;height:30px;line-height:32.0px;letter-spacing:-0.3px;left:1435.8px;">00:02:10</div>
<div class="t" style="top:330px;height:30px;line-height:32.0px;letter-spacing:-0.24px;left:1515.7px;">28.11.202...</div>
<div class="t" style="top:330px;height:30px;line-height:32.0px;letter-spacing:-0.09px;left:1611.1px;">E:\Downlo...</div>
<div class="t" style="top:330px;height:30px;line-height:32.0px;letter-spacing:0.26px;left:1710.7px;">E:\Downloads\M...</div>
<div class="t" style="top:330px;height:30px;line-height:32.0px;letter-spacing:0.3px;left:1864.6px;">flac</div>
<div class="t" style="top:360px;height:30px;line-height:32.0px;letter-spacing:0.11px;left:468.4px;">Nick D&#x27;Vir...</div>
<div class="t" style="top:360px;height:30px;line-height:32.0px;letter-spacing:-0.12px;left:568.4px;">Rewiring Genesis ...</div>
<div class="t" style="top:360px;height:30px;line-height:32.0px;letter-spacing:0.11px;left:723.2px;">09. Counting Out Time.flac</div>
<div class="t" style="top:360px;height:30px;line-height:32.0px;color:#3a923c;left:1014.8px;">2992</div>
<div class="t" style="top:360px;height:30px;line-height:32.0px;color:#3a923c;letter-spacing:0.14px;left:1091.9px;">2992</div>
<div class="t" style="top:360px;height:30px;line-height:32.0px;letter-spacing:-0.3px;left:1149.6px;">00:03:50</div>
<div class="t" style="top:360px;height:30px;line-height:32.0px;letter-spacing:-0.4px;left:1227.2px;">84.171 KB</div>
<div class="t" style="top:360px;height:30px;line-height:32.0px;letter-spacing:-0.15px;left:1313.2px;">Counting ...</div>
<div class="t" style="top:360px;height:30px;line-height:32.0px;letter-spacing:-0.3px;left:1435.8px;">00:03:50</div>
<div class="t" style="top:360px;height:30px;line-height:32.0px;letter-spacing:-0.24px;left:1515.7px;">28.11.202...</div>
<div class="t" style="top:360px;height:30px;line-height:32.0px;letter-spacing:-0.09px;left:1611.1px;">E:\Downlo...</div>
<div class="t" style="top:360px;height:30px;line-height:32.0px;letter-spacing:0.26px;left:1710.7px;">E:\Downloads\M...</div>
<div class="t" style="top:360px;height:30px;line-height:32.0px;letter-spacing:0.3px;left:1864.6px;">flac</div>
<div class="t" style="top:390px;height:30px;line-height:32.0px;letter-spacing:0.11px;left:468.4px;">Nick D&#x27;Vir...</div>
<div class="t" style="top:390px;height:30px;line-height:32.0px;letter-spacing:-0.12px;left:568.4px;">Rewiring Genesis ...</div>
<div class="t" style="top:390px;height:30px;line-height:32.0px;letter-spacing:-0.01px;left:723.2px;">10. The Carpet Crawlers.flac</div>
<div class="t" style="top:390px;height:30px;line-height:32.0px;color:#3a923c;left:1014.8px;">2787</div>
<div class="t" style="top:390px;height:30px;line-height:32.0px;color:#3a923c;letter-spacing:0.14px;left:1091.9px;">2787</div>
<div class="t" style="top:390px;height:30px;line-height:32.0px;letter-spacing:-0.3px;left:1149.6px;">00:06:22</div>
<div class="t" style="top:390px;height:30px;line-height:32.0px;letter-spacing:-0.09px;left:1244.0px;">127 MB</div>
<div class="t" style="top:390px;height:30px;line-height:32.0px;letter-spacing:-0.08px;left:1313.2px;">The Carp...</div>
<div class="t" style="top:390px;height:30px;line-height:32.0px;letter-spacing:-0.3px;left:1435.8px;">00:06:22</div>
<div class="t" style="top:390px;height:30px;line-height:32.0px;letter-spacing:-0.24px;left:1515.7px;">28.11.202...</div>
<div class="t" style="top:390px;height:30px;line-height:32.0px;letter-spacing:-0.09px;left:1611.1px;">E:\Downlo...</div>
<div class="t" style="top:390px;height:30px;line-height:32.0px;letter-spacing:0.26px;left:1710.7px;">E:\Downloads\M...</div>
<div class="t" style="top:390px;height:30px;line-height:32.0px;letter-spacing:0.3px;left:1864.6px;">flac</div>
<div class="t" style="top:420px;height:30px;line-height:32.0px;letter-spacing:0.11px;left:468.4px;">Nick D&#x27;Vir...</div>
<div class="t" style="top:420px;height:30px;line-height:32.0px;letter-spacing:-0.12px;left:568.4px;">Rewiring Genesis ...</div>
<div class="t" style="top:420px;height:30px;line-height:32.0px;letter-spacing:0.17px;left:723.2px;">11. The Chamber Of 32 Doors.flac</div>
<div class="t" style="top:420px;height:30px;line-height:32.0px;color:#3a923c;left:1014.8px;">2771</div>
<div class="t" style="top:420px;height:30px;line-height:32.0px;color:#3a923c;letter-spacing:0.14px;left:1091.9px;">2771</div>
<div class="t" style="top:420px;height:30px;line-height:32.0px;letter-spacing:-0.3px;left:1149.6px;">00:05:45</div>
<div class="t" style="top:420px;height:30px;line-height:32.0px;letter-spacing:0.15px;left:1244.0px;">114 MB</div>
<div class="t" style="top:420px;height:30px;line-height:32.0px;letter-spacing:-0.28px;left:1313.2px;">The Cham...</div>
<div class="t" style="top:420px;height:30px;line-height:32.0px;letter-spacing:-0.3px;left:1435.8px;">00:05:45</div>
<div class="t" style="top:420px;height:30px;line-height:32.0px;letter-spacing:-0.24px;left:1515.7px;">28.11.202...</div>
<div class="t" style="top:420px;height:30px;line-height:32.0px;letter-spacing:-0.09px;left:1611.1px;">E:\Downlo...</div>
<div class="t" style="top:420px;height:30px;line-height:32.0px;letter-spacing:0.26px;left:1710.7px;">E:\Downloads\M...</div>
<div class="t" style="top:420px;height:30px;line-height:32.0px;letter-spacing:0.3px;left:1864.6px;">flac</div>
<div class="t" style="top:450px;height:30px;line-height:32.0px;letter-spacing:0.11px;left:468.4px;">Nick D&#x27;Vir...</div>
<div class="t" style="top:450px;height:30px;line-height:32.0px;letter-spacing:-0.12px;left:568.4px;">Rewiring Genesis ...</div>
<div class="t" style="top:450px;height:30px;line-height:32.0px;letter-spacing:-0.06px;left:723.2px;">12. Lilywhite Lilith.flac</div>
<div class="t" style="top:450px;height:30px;line-height:32.0px;color:#3a923c;left:1014.8px;">2888</div>
<div class="t" style="top:450px;height:30px;line-height:32.0px;color:#3a923c;letter-spacing:0.14px;left:1091.9px;">2888</div>
<div class="t" style="top:450px;height:30px;line-height:32.0px;letter-spacing:-0.3px;left:1149.6px;">00:02:37</div>
<div class="t" style="top:450px;height:30px;line-height:32.0px;letter-spacing:-0.4px;left:1227.2px;">55.483 KB</div>
<div class="t" style="top:450px;height:30px;line-height:32.0px;letter-spacing:-0.22px;left:1313.2px;">Lilywhite L...</div>
<div class="t" style="top:450px;height:30px;line-height:32.0px;letter-spacing:-0.3px;left:1435.8px;">00:02:37</div>
<div class="t" style="top:450px;height:30px;line-height:32.0px;letter-spacing:-0.24px;left:1515.7px;">28.11.202...</div>
<div class="t" style="top:450px;height:30px;line-height:32.0px;letter-spacing:-0.09px;left:1611.1px;">E:\Downlo...</div>
<div class="t" style="top:450px;height:30px;line-height:32.0px;letter-spacing:0.26px;left:1710.7px;">E:\Downloads\M...</div>
<div class="t" style="top:450px;height:30px;line-height:32.0px;letter-spacing:0.3px;left:1864.6px;">flac</div>
<div class="t" style="top:480px;height:30px;line-height:32.0px;letter-spacing:0.11px;left:468.4px;">Nick D&#x27;Vir...</div>
<div class="t" style="top:480px;height:30px;line-height:32.0px;letter-spacing:-0.12px;left:568.4px;">Rewiring Genesis ...</div>
<div class="t" style="top:480px;height:30px;line-height:32.0px;letter-spacing:0.06px;left:723.2px;">13. The Waiting Room.flac</div>
<div class="t" style="top:480px;height:30px;line-height:32.0px;color:#3a923c;left:1014.8px;">2751</div>
<div class="t" style="top:480px;height:30px;line-height:32.0px;color:#3a923c;letter-spacing:0.14px;left:1091.9px;">2751</div>
<div class="t" style="top:480px;height:30px;line-height:32.0px;letter-spacing:-0.3px;left:1149.6px;">00:05:36</div>
<div class="t" style="top:480px;height:30px;line-height:32.0px;letter-spacing:0.15px;left:1244.0px;">110 MB</div>
<div class="t" style="top:480px;height:30px;line-height:32.0px;letter-spacing:-0.01px;left:1313.2px;">The Waiti...</div>
<div class="t" style="top:480px;height:30px;line-height:32.0px;letter-spacing:-0.3px;left:1435.8px;">00:05:36</div>
<div class="t" style="top:480px;height:30px;line-height:32.0px;letter-spacing:-0.24px;left:1515.7px;">28.11.202...</div>
<div class="t" style="top:480px;height:30px;line-height:32.0px;letter-spacing:-0.09px;left:1611.1px;">E:\Downlo...</div>
<div class="t" style="top:480px;height:30px;line-height:32.0px;letter-spacing:0.26px;left:1710.7px;">E:\Downloads\M...</div>
<div class="t" style="top:480px;height:30px;line-height:32.0px;letter-spacing:0.3px;left:1864.6px;">flac</div>
<div class="t" style="top:510px;height:30px;line-height:32.0px;letter-spacing:0.11px;left:468.4px;">Nick D&#x27;Vir...</div>
<div class="t" style="top:510px;height:30px;line-height:32.0px;letter-spacing:-0.12px;left:568.4px;">Rewiring Genesis ...</div>
<div class="t" style="top:510px;height:30px;line-height:32.0px;letter-spacing:-0.06px;left:723.2px;">14. Anyway.flac</div>
<div class="t" style="top:510px;height:30px;line-height:32.0px;color:#3a923c;left:1014.8px;">2870</div>
<div class="t" style="top:510px;height:30px;line-height:32.0px;color:#3a923c;letter-spacing:0.14px;left:1091.9px;">2870</div>
<div class="t" style="top:510px;height:30px;line-height:32.0px;letter-spacing:-0.3px;left:1149.6px;">00:03:08</div>
<div class="t" style="top:510px;height:30px;line-height:32.0px;letter-spacing:-0.4px;left:1227.2px;">65.996 KB</div>
<div class="t" style="top:510px;height:30px;line-height:32.0px;letter-spacing:-0.37px;left:1313.2px;">Anyway</div>
<div class="t" style="top:510px;height:30px;line-height:32.0px;letter-spacing:-0.3px;left:1435.8px;">00:03:08</div>
<div class="t" style="top:510px;height:30px;line-height:32.0px;letter-spacing:-0.24px;left:1515.7px;">28.11.202...</div>
<div class="t" style="top:510px;height:30px;line-height:32.0px;letter-spacing:-0.09px;left:1611.1px;">E:\Downlo...</div>
<div class="t" style="top:510px;height:30px;line-height:32.0px;letter-spacing:0.26px;left:1710.7px;">E:\Downloads\M...</div>
<div class="t" style="top:510px;height:30px;line-height:32.0px;letter-spacing:0.3px;left:1864.6px;">flac</div>
<div class="t" style="top:540px;height:30px;line-height:32.0px;letter-spacing:0.11px;left:468.4px;">Nick D&#x27;Vir...</div>
<div class="t" style="top:540px;height:30px;line-height:32.0px;letter-spacing:-0.12px;left:568.4px;">Rewiring Genesis ...</div>
<div class="t" style="top:540px;height:30px;line-height:32.0px;letter-spacing:-0.03px;left:723.2px;">15. Here Comes The Supernatura...</div>
<div class="t" style="top:540px;height:30px;line-height:32.0px;color:#3a923c;left:1014.8px;">2841</div>
<div class="t" style="top:540px;height:30px;line-height:32.0px;color:#3a923c;letter-spacing:0.14px;left:1091.9px;">2841</div>
<div class="t" style="top:540px;height:30px;line-height:32.0px;letter-spacing:-0.3px;left:1149.6px;">00:02:31</div>
<div class="t" style="top:540px;height:30px;line-height:32.0px;letter-spacing:-0.4px;left:1227.2px;">52.500 KB</div>
<div class="t" style="top:540px;height:30px;line-height:32.0px;letter-spacing:-0.1px;left:1313.2px;">Here Com...</div>
<div class="t" style="top:540px;height:30px;line-height:32.0px;letter-spacing:-0.3px;left:1435.8px;">00:02:31</div>
<div class="t" style="top:540px;height:30px;line-height:32.0px;letter-spacing:-0.24px;left:1515.7px;">28.11.202...</div>
<div class="t" style="top:540px;height:30px;line-height:32.0px;letter-spacing:-0.09px;left:1611.1px;">E:\Downlo...</div>
<div class="t" style="top:540px;height:30px;line-height:32.0px;letter-spacing:0.26px;left:1710.7px;">E:\Downloads\M...</div>
<div class="t" style="top:540px;height:30px;line-height:32.0px;letter-spacing:0.3px;left:1864.6px;">flac</div>
<div class="t" style="top:570px;height:30px;line-height:32.0px;letter-spacing:0.11px;left:468.4px;">Nick D&#x27;Vir...</div>
<div class="t" style="top:570px;height:30px;line-height:32.0px;letter-spacing:-0.12px;left:568.4px;">Rewiring Genesis ...</div>
<div class="t" style="top:570px;height:30px;line-height:32.0px;letter-spacing:-0.13px;left:723.2px;">16. The Lamia.flac</div>
<div class="t" style="top:570px;height:30px;line-height:32.0px;color:#3a923c;left:1014.8px;">2704</div>
<div class="t" style="top:570px;height:30px;line-height:32.0px;color:#3a923c;letter-spacing:0.14px;left:1091.9px;">2704</div>
<div class="t" style="top:570px;height:30px;line-height:32.0px;letter-spacing:-0.3px;left:1149.6px;">00:07:14</div>
<div class="t" style="top:570px;height:30px;line-height:32.0px;letter-spacing:-0.09px;left:1244.0px;">140 MB</div>
<div class="t" style="top:570px;height:30px;line-height:32.0px;letter-spacing:-0.17px;left:1313.2px;">The Lamia</div>
<div class="t" style="top:570px;height:30px;line-height:32.0px;letter-spacing:-0.3px;left:1435.8px;">00:07:14</div>
<div class="t" style="top:570px;height:30px;line-height:32.0px;letter-spacing:-0.24px;left:1515.7px;">28.11.202...</div>
<div class="t" style="top:570px;height:30px;line-height:32.0px;letter-spacing:-0.09px;left:1611.1px;">E:\Downlo...</div>
<div class="t" style="top:570px;height:30px;line-height:32.0px;letter-spacing:0.26px;left:1710.7px;">E:\Downloads\M...</div>
<div class="t" style="top:570px;height:30px;line-height:32.0px;letter-spacing:0.3px;left:1864.6px;">flac</div>
<div class="t" style="top:600px;height:30px;line-height:32.0px;letter-spacing:0.11px;left:468.4px;">Nick D&#x27;Vir...</div>
<div class="t" style="top:600px;height:30px;line-height:32.0px;letter-spacing:-0.12px;left:568.4px;">Rewiring Genesis ...</div>
<div class="t" style="top:600px;height:30px;line-height:32.0px;letter-spacing:-0.01px;left:723.2px;">17. Silent Sorrow in Empty Boats....</div>
<div class="t" style="top:600px;height:30px;line-height:32.0px;color:#3a923c;left:1014.8px;">2315</div>
<div class="t" style="top:600px;height:30px;line-height:32.0px;color:#3a923c;letter-spacing:0.14px;left:1091.9px;">2315</div>
<div class="t" style="top:600px;height:30px;line-height:32.0px;letter-spacing:-0.3px;left:1149.6px;">00:02:54</div>
<div class="t" style="top:600px;height:30px;line-height:32.0px;letter-spacing:-0.4px;left:1227.2px;">49.290 KB</div>
<div class="t" style="top:600px;height:30px;line-height:32.0px;letter-spacing:0.28px;left:1313.2px;">Silent Sor...</div>
<div class="t" style="top:600px;height:30px;line-height:32.0px;letter-spacing:-0.3px;left:1435.8px;">00:02:54</div>
<div class="t" style="top:600px;height:30px;line-height:32.0px;letter-spacing:-0.24px;left:1515.7px;">28.11.202...</div>
<div class="t" style="top:600px;height:30px;line-height:32.0px;letter-spacing:-0.09px;left:1611.1px;">E:\Downlo...</div>
<div class="t" style="top:600px;height:30px;line-height:32.0px;letter-spacing:0.26px;left:1710.7px;">E:\Downloads\M...</div>
<div class="t" style="top:600px;height:30px;line-height:32.0px;letter-spacing:0.3px;left:1864.6px;">flac</div>
<div class="t" style="top:630px;height:30px;line-height:32.0px;letter-spacing:0.11px;left:468.4px;">Nick D&#x27;Vir...</div>
<div class="t" style="top:630px;height:30px;line-height:32.0px;letter-spacing:-0.12px;left:568.4px;">Rewiring Genesis ...</div>
<div class="t" style="top:630px;height:30px;line-height:32.0px;letter-spacing:0.11px;left:723.2px;">18. The Colony of Slippermen.flac</div>
<div class="t" style="top:630px;height:30px;line-height:32.0px;color:#3a923c;left:1014.8px;">2892</div>
<div class="t" style="top:630px;height:30px;line-height:32.0px;color:#3a923c;letter-spacing:0.14px;left:1091.9px;">2892</div>
<div class="t" style="top:630px;height:30px;line-height:32.0px;letter-spacing:-0.3px;left:1149.6px;">00:08:40</div>
<div class="t" style="top:630px;height:30px;line-height:32.0px;letter-spacing:-0.09px;left:1244.0px;">180 MB</div>
<div class="t" style="top:630px;height:30px;line-height:32.0px;letter-spacing:-0.18px;left:1313.2px;">The Colon...</div>
<div class="t" style="top:630px;height:30px;line-height:32.0px;letter-spacing:-0.3px;left:1435.8px;">00:08:40</div>
<div class="t" style="top:630px;height:30px;line-height:32.0px;letter-spacing:-0.24px;left:1515.7px;">28.11.202...</div>
<div class="t" style="top:630px;height:30px;line-height:32.0px;letter-spacing:-0.09px;left:1611.1px;">E:\Downlo...</div>
<div class="t" style="top:630px;height:30px;line-height:32.0px;letter-spacing:0.26px;left:1710.7px;">E:\Downloads\M...</div>
<div class="t" style="top:630px;height:30px;line-height:32.0px;letter-spacing:0.3px;left:1864.6px;">flac</div>
<div class="t" style="top:660px;height:30px;line-height:32.0px;letter-spacing:0.11px;left:468.4px;">Nick D&#x27;Vir...</div>
<div class="t" style="top:660px;height:30px;line-height:32.0px;letter-spacing:-0.12px;left:568.4px;">Rewiring Genesis ...</div>
<div class="t" style="top:660px;height:30px;line-height:32.0px;letter-spacing:-0.19px;left:723.2px;">19. Ravine.flac</div>
<div class="t" style="top:660px;height:30px;line-height:32.0px;color:#3a923c;left:1014.8px;">2558</div>
<div class="t" style="top:660px;height:30px;line-height:32.0px;color:#3a923c;letter-spacing:0.14px;left:1091.9px;">2558</div>
<div class="t" style="top:660px;height:30px;line-height:32.0px;letter-spacing:-0.3px;left:1149.6px;">00:01:55</div>
<div class="t" style="top:660px;height:30px;line-height:32.0px;letter-spacing:-0.4px;left:1227.2px;">36.018 KB</div>
<div class="t" style="top:660px;height:30px;line-height:32.0px;letter-spacing:-0.45px;left:1313.2px;">Ravine</div>
<div class="t" style="top:660px;height:30px;line-height:32.0px;letter-spacing:-0.3px;left:1435.8px;">00:01:55</div>
<div class="t" style="top:660px;height:30px;line-height:32.0px;letter-spacing:-0.24px;left:1515.7px;">28.11.202...</div>
<div class="t" style="top:660px;height:30px;line-height:32.0px;letter-spacing:-0.09px;left:1611.1px;">E:\Downlo...</div>
<div class="t" style="top:660px;height:30px;line-height:32.0px;letter-spacing:0.26px;left:1710.7px;">E:\Downloads\M...</div>
<div class="t" style="top:660px;height:30px;line-height:32.0px;letter-spacing:0.3px;left:1864.6px;">flac</div>
<div class="t" style="top:690px;height:30px;line-height:32.0px;letter-spacing:0.11px;left:468.4px;">Nick D&#x27;Vir...</div>
<div class="t" style="top:690px;height:30px;line-height:32.0px;letter-spacing:-0.12px;left:568.4px;">Rewiring Genesis ...</div>
<div class="t" style="top:690px;height:30px;line-height:32.0px;letter-spacing:0.01px;left:723.2px;">20. The Light Dies Down on Broa...</div>
<div class="t" style="top:690px;height:30px;line-height:32.0px;color:#3a923c;left:1014.8px;">2880</div>
<div class="t" style="top:690px;height:30px;line-height:32.0px;color:#3a923c;letter-spacing:0.14px;left:1091.9px;">2880</div>
<div class="t" style="top:690px;height:30px;line-height:32.0px;letter-spacing:-0.13px;left:1149.6px;">00:04:11</div>
<div class="t" style="top:690px;height:30px;line-height:32.0px;letter-spacing:-0.4px;left:1227.2px;">88.408 KB</div>
<div class="t" style="top:690px;height:30px;line-height:32.0px;letter-spacing:-0.11px;left:1313.2px;">The Light ...</div>
<div class="t" style="top:690px;height:30px;line-height:32.0px;letter-spacing:-0.13px;left:1435.8px;">00:04:11</div>
<div class="t" style="top:690px;height:30px;line-height:32.0px;letter-spacing:-0.24px;left:1515.7px;">28.11.202...</div>
<div class="t" style="top:690px;height:30px;line-height:32.0px;letter-spacing:-0.09px;left:1611.1px;">E:\Downlo...</div>
<div class="t" style="top:690px;height:30px;line-height:32.0px;letter-spacing:0.26px;left:1710.7px;">E:\Downloads\M...</div>
<div class="t" style="top:690px;height:30px;line-height:32.0px;letter-spacing:0.3px;left:1864.6px;">flac</div>
<div class="t" style="top:720px;height:30px;line-height:32.0px;letter-spacing:0.11px;left:468.4px;">Nick D&#x27;Vir...</div>
<div class="t" style="top:720px;height:30px;line-height:32.0px;letter-spacing:-0.12px;left:568.4px;">Rewiring Genesis ...</div>
<div class="t" style="top:720px;height:30px;line-height:32.0px;letter-spacing:-0.01px;left:723.2px;">21. Riding the Scree.flac</div>
<div class="t" style="top:720px;height:30px;line-height:32.0px;color:#3a923c;left:1014.8px;">2969</div>
<div class="t" style="top:720px;height:30px;line-height:32.0px;color:#3a923c;letter-spacing:0.14px;left:1091.9px;">2969</div>
<div class="t" style="top:720px;height:30px;line-height:32.0px;letter-spacing:-0.3px;left:1149.6px;">00:03:58</div>
<div class="t" style="top:720px;height:30px;line-height:32.0px;letter-spacing:-0.4px;left:1227.2px;">86.413 KB</div>
<div class="t" style="top:720px;height:30px;line-height:32.0px;letter-spacing:-0.02px;left:1313.2px;">Riding the...</div>
<div class="t" style="top:720px;height:30px;line-height:32.0px;letter-spacing:-0.3px;left:1435.8px;">00:03:58</div>
<div class="t" style="top:720px;height:30px;line-height:32.0px;letter-spacing:-0.24px;left:1515.7px;">28.11.202...</div>
<div class="t" style="top:720px;height:30px;line-height:32.0px;letter-spacing:-0.09px;left:1611.1px;">E:\Downlo...</div>
<div class="t" style="top:720px;height:30px;line-height:32.0px;letter-spacing:0.26px;left:1710.7px;">E:\Downloads\M...</div>
<div class="t" style="top:720px;height:30px;line-height:32.0px;letter-spacing:0.3px;left:1864.6px;">flac</div>
<div class="t" style="top:750px;height:30px;line-height:32.0px;letter-spacing:0.11px;left:468.4px;">Nick D&#x27;Vir...</div>
<div class="t" style="top:750px;height:30px;line-height:32.0px;letter-spacing:-0.12px;left:568.4px;">Rewiring Genesis ...</div>
<div class="t" style="top:750px;height:30px;line-height:32.0px;letter-spacing:-0.01px;left:723.2px;">22. In the Rapids.flac</div>
<div class="t" style="top:750px;height:30px;line-height:32.0px;color:#3a923c;left:1014.8px;">2579</div>
<div class="t" style="top:750px;height:30px;line-height:32.0px;color:#3a923c;letter-spacing:0.14px;left:1091.9px;">2579</div>
<div class="t" style="top:750px;height:30px;line-height:32.0px;letter-spacing:-0.3px;left:1149.6px;">00:02:33</div>
<div class="t" style="top:750px;height:30px;line-height:32.0px;letter-spacing:-0.4px;left:1227.2px;">48.297 KB</div>
<div class="t" style="top:750px;height:30px;line-height:32.0px;letter-spacing:-0.16px;left:1313.2px;">In the Rap...</div>
<div class="t" style="top:750px;height:30px;line-height:32.0px;letter-spacing:-0.3px;left:1435.8px;">00:02:33</div>
<div class="t" style="top:750px;height:30px;line-height:32.0px;letter-spacing:-0.24px;left:1515.7px;">28.11.202...</div>
<div class="t" style="top:750px;height:30px;line-height:32.0px;letter-spacing:-0.09px;left:1611.1px;">E:\Downlo...</div>
<div class="t" style="top:750px;height:30px;line-height:32.0px;letter-spacing:0.26px;left:1710.7px;">E:\Downloads\M...</div>
<div class="t" style="top:750px;height:30px;line-height:32.0px;letter-spacing:0.3px;left:1864.6px;">flac</div>
<div class="t" style="top:780px;height:30px;line-height:32.0px;letter-spacing:0.11px;left:468.4px;">Nick D&#x27;Vir...</div>
<div class="t" style="top:780px;height:30px;line-height:32.0px;letter-spacing:-0.12px;left:568.4px;">Rewiring Genesis ...</div>
<div class="t" style="top:780px;height:30px;line-height:32.0px;letter-spacing:-0.07px;left:723.2px;">23. It.flac</div>
<div class="t" style="top:780px;height:30px;line-height:32.0px;color:#3a923c;left:1014.8px;">3055</div>
<div class="t" style="top:780px;height:30px;line-height:32.0px;color:#3a923c;letter-spacing:0.14px;left:1091.9px;">3055</div>
<div class="t" style="top:780px;height:30px;line-height:32.0px;letter-spacing:-0.3px;left:1149.6px;">00:04:32</div>
<div class="t" style="top:780px;height:30px;line-height:32.0px;letter-spacing:-0.14px;left:1224.5px;">101.608 ...</div>
<div class="t" style="top:780px;height:30px;line-height:32.0px;letter-spacing:1.3px;left:1313.2px;">It</div>
<div class="t" style="top:780px;height:30px;line-height:32.0px;letter-spacing:-0.3px;left:1435.8px;">00:04:32</div>
<div class="t" style="top:780px;height:30px;line-height:32.0px;letter-spacing:-0.24px;left:1515.7px;">28.11.202...</div>
<div class="t" style="top:780px;height:30px;line-height:32.0px;letter-spacing:-0.09px;left:1611.1px;">E:\Downlo...</div>
<div class="t" style="top:780px;height:30px;line-height:32.0px;letter-spacing:0.26px;left:1710.7px;">E:\Downloads\M...</div>
<div class="t" style="top:780px;height:30px;line-height:32.0px;letter-spacing:0.3px;left:1864.6px;">flac</div>
<div class="a" style="left:1897px;top:120px;width:22px;height:807px;background:#efefef"></div>
<svg class="a" style="left:1901px;top:126px" width="13" height="9"><path d="M1.500 7.800L6.500 2L11.500 7.800z" fill="#3c3c3c"/></svg>
<svg class="a" style="left:1901px;top:913px" width="13" height="9"><path d="M1.500 1.200L6.500 7L11.500 1.200z" fill="#3c3c3c"/></svg>
<div class="a" style="left:389px;top:927px;width:1531px;height:23px;background:#f1f1f1"></div>
<div class="a" style="left:411px;top:927px;width:739px;height:22px;background:#c6c6c6;border:1px solid #8c8c8c;border-top-color:#3e3e3e;border-left:2px solid #3e3e3e"></div>
<svg class="a" style="left:396px;top:931px" width="9" height="13"><path d="M7.400 1.500L1.200 6.500L7.400 11.500z" fill="#d98b34"/></svg>
<svg class="a" style="left:1882px;top:931px" width="9" height="13"><path d="M2 1.500L8 6.500L2 11.500z" fill="#d98b34"/></svg>
<div class="a" style="left:412px;top:961px;width:1448px;height:9px;background:#c8c8c8;border-top:1px solid #d6d6d6;border-bottom:1px solid #a8a8a8;border-right:1px solid #a8a8a8"></div>
<div class="a" style="left:405px;top:958.500px;width:15px;height:15px;border-radius:8px;background:#dc8a2e;border:1.600px solid #2a1a08"></div>
<div class="a" style="left:1886px;top:960px;width:9px;height:112px;background:#c8c8c8;border:1px solid #b4b4b4"></div>
<div class="a" style="left:1883.700px;top:968.800px;width:15px;height:15px;border-radius:8px;background:#dc8a2e;border:1.600px solid #2a1a08"></div>
<div class="t" style="top:977px;height:30px;line-height:31.0px;font-size:15px;color:#a2a2a2;letter-spacing:0.36px;left:398.8px;">+00:00:00</div>
<div class="t" style="top:977px;height:30px;line-height:31.0px;font-size:15px;color:#a2a2a2;letter-spacing:0.24px;left:601.9px;">-00:00:00</div>
<div class="a" style="left:677.300px;top:975px;width:2.900px;height:100px;background:#1e1e1e"></div>
<div class="t" style="top:978.5px;height:30px;line-height:31.0px;font-size:14.5px;color:#8c8c8c;letter-spacing:0.33px;left:687.2px;">Artist</div>
<div class="t" style="top:1030px;height:30px;line-height:31.0px;font-size:14.5px;color:#8c8c8c;letter-spacing:0.34px;left:687.2px;">Title</div>
<div class="a" style="left:393.500px;top:1008.500px;width:275.500px;height:67.500px;background:#353535;border:1px solid #151515"></div>
<div class="a" style="left:461.9px;top:1009px;width:2px;height:67px;background:#141414"></div>
<div class="a" style="left:530.6px;top:1009px;width:2px;height:67px;background:#141414"></div>
<div class="a" style="left:599.4px;top:1009px;width:2px;height:67px;background:#141414"></div>
<svg class="a" style="left:394px;top:1009px" width="276" height="67" viewBox="394 1009 276 67" fill="none" stroke="#c8c8c8" stroke-width="2.500" stroke-linejoin="miter"><circle cx="427.400" cy="1042.500" r="15.500"/><path d="M422.300 1036.300v12.400M433 1036.300l-9.200 6.200 9.200 6.200z"/><circle cx="496.500" cy="1042.500" r="22.600"/><rect x="486.300" y="1032.200" width="20.200" height="20.600"/><circle cx="565.200" cy="1042.500" r="22.600"/><path d="M559.200 1031.200l17.300 11.300-17.300 11.300z"/><circle cx="633.700" cy="1042.500" r="15.500"/><path d="M638.900 1036.300v12.400M628.200 1036.300l9.200 6.200-9.200 6.200z"/></svg>
<div class="a" style="left:4px;top:615px;width:458px;height:295px;background:#333333;border-radius:6px"></div>
<div class="a" style="left:11px;top:651px;width:444px;height:208px;background:#fff"></div>
<div class="a" style="left:11px;top:859px;width:444px;height:44px;background:#f0f0f0;border-top:1px solid #dfdfdf"></div>
<div class="t" style="top:617px;height:30px;line-height:31.0px;font-size:14px;color:#f4f4f4;font-weight:bold;letter-spacing:0.14px;left:12.4px;">Fakin&#x27; The Funk?</div>
<div class="a" style="left:437px;top:623.500px;width:16px;height:16px;border-radius:8px;background:#7c7c7c"></div>
<svg class="a" style="left:437px;top:623.500px" width="16" height="16" fill="none" stroke="#262626" stroke-width="2"><path d="M5 5l6 6M11 5l-6 6"/></svg>
<div class="a" style="left:25px;top:665px;width:37.500px;height:37.500px;border-radius:19px;background:#0b76d3"></div>
<div class="a" style="left:42.600px;top:677.500px;width:2.400px;height:17.500px;background:#fff"></div><div class="a" style="left:42px;top:671.800px;width:3.600px;height:3.600px;border-radius:2px;background:#fff"></div>
<div class="t" style="top:664px;height:26px;line-height:28.4px;font-size:18px;color:#2b4a9e;letter-spacing:0.6px;left:76.9px;">Mr. Funk has analyzed 23 files in total.</div>
<div class="t" style="top:716.5px;height:26px;line-height:28.4px;font-size:18px;color:#2b4a9e;letter-spacing:0.79px;left:76.5px;">And what to say:</div>
<div class="t" style="top:742.7px;height:26px;line-height:28.4px;font-size:18px;color:#2b4a9e;letter-spacing:-0.2px;left:76.9px;">EVERYTHING LOOKS FINE!</div>
<div class="t" style="top:795.2px;height:26px;line-height:28.4px;font-size:18px;color:#2b4a9e;letter-spacing:0.89px;left:76.5px;">Congratulations!</div>
<div class="a" style="left:364px;top:870px;width:86px;height:29px;background:#d98a2e;border:1.500px solid #33261a"></div>
<div class="t" style="top:870px;height:29px;line-height:29px;font-size:15.5px;color:#141414;letter-spacing:-0.45px;left:396.7px;">OK</div>
<div class="a" style="left:1919px;top:87px;width:1px;height:991px;background:#f6f6f6"></div>
<div class="a" style="left:0;top:120px;width:1px;height:958px;background:#dedede"></div>
<div class="a" style="left:0;top:1078px;width:1920px;height:2px;background:#bdbdbd"></div>
<div class="a" style="left:0;top:1078px;width:60px;height:2px;background:#222"></div>
<div class="a" style="left:420px;top:1078px;width:1500px;height:2px;background:#222"></div>
</body></html>
